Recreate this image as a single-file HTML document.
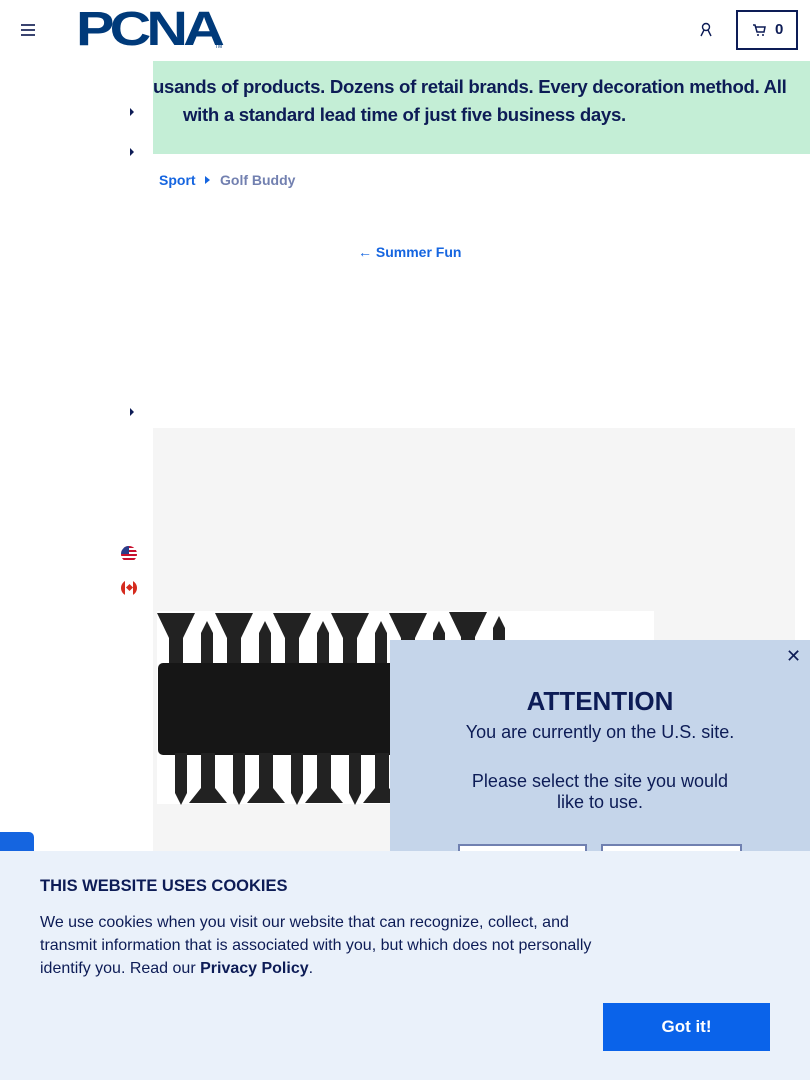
<!DOCTYPE html>
<html><head><style>
*{margin:0;padding:0;box-sizing:border-box}
body{width:810px;height:1080px;position:relative;overflow:hidden;background:#fff;font-family:"Liberation Sans",sans-serif;color:#0d1c56}
.abs{position:absolute}
</style></head><body>
<div class="abs" style="left:21px;top:24px;width:14px">
<div style="height:2px;background:#3a4470;margin-bottom:3px"></div><div style="height:2px;background:#3a4470;margin-bottom:3px"></div><div style="height:2px;background:#3a4470"></div></div>
<div class="abs" style="left:76px;top:3px;font:900 48px 'Liberation Sans';color:#003a7a;letter-spacing:-4px;line-height:54px;transform:scaleX(1.2);transform-origin:left">PCNA</div>
<div class="abs" style="left:215px;top:44px;font-size:5px;color:#003a7a">TM</div>
<svg class="abs" style="left:699px;top:22px" width="14" height="16" viewBox="0 0 14 16"><circle cx="7" cy="5" r="3.5" fill="none" stroke="#0d1c56" stroke-width="1.4"/><path d="M2 14 L5 8 M12 14 L9 8" stroke="#0d1c56" stroke-width="1.4" fill="none"/></svg>
<div class="abs" style="left:736px;top:10px;width:62px;height:40px;border:2px solid #0d1c56"></div>
<svg class="abs" style="left:752px;top:23px" width="14" height="14" viewBox="0 0 14 14"><path d="M1 2h2l2 7h7l1-5H4" fill="none" stroke="#0d1c56" stroke-width="1.5"/><circle cx="6" cy="12" r="1" fill="#0d1c56"/><circle cx="11" cy="12" r="1" fill="#0d1c56"/></svg>
<div class="abs" style="left:775px;top:21px;font:bold 15px 'Liberation Sans'">0</div>
<div class="abs" style="left:153px;top:61px;width:657px;height:93px;background:#c4eed6"></div>
<div class="abs" style="left:153px;top:73px;width:657px;font:bold 18.6px/28px 'Liberation Sans';white-space:nowrap;letter-spacing:-0.3px;overflow:hidden">usands of products. Dozens of retail brands. Every decoration method. All<br><span style="padding-left:30px">with a standard lead time of just five business days.</span></div>
<div class="abs" style="left:130px;top:108px;border-left:4px solid #0d1c56;border-top:4px solid transparent;border-bottom:4px solid transparent"></div>
<div class="abs" style="left:130px;top:148px;border-left:4px solid #0d1c56;border-top:4px solid transparent;border-bottom:4px solid transparent"></div>
<div class="abs" style="left:130px;top:408px;border-left:4px solid #0d1c56;border-top:4px solid transparent;border-bottom:4px solid transparent"></div>
<div class="abs" style="left:159px;top:172px;font:bold 14px 'Liberation Sans';color:#1565e0">Sport</div>
<div class="abs" style="left:205px;top:176px;border-left:5px solid #1565e0;border-top:4px solid transparent;border-bottom:4px solid transparent"></div>
<div class="abs" style="left:220px;top:172px;font:bold 14px 'Liberation Sans';color:#7280b0">Golf Buddy</div>
<div class="abs" style="left:358px;top:244px;font:bold 14px 'Liberation Sans';color:#1565e0">← Summer Fun</div>
<div class="abs" style="left:121px;top:546px;width:16px;height:16px;border-radius:50%;background:repeating-linear-gradient(#c8102e 0 2px,#fff 2px 4px);overflow:hidden"><div style="width:8px;height:8px;background:#2a3c8a"></div></div>
<div class="abs" style="left:121px;top:580px;width:16px;height:16px;border-radius:50%;background:linear-gradient(90deg,#d52b1e 4px,#fff 4px 12px,#d52b1e 12px)"><div style="margin:5px auto;width:5px;height:5px;background:#d52b1e;transform:rotate(45deg)"></div></div>
<div class="abs" style="left:153px;top:428px;width:642px;height:440px;background:#f5f5f5"></div>
<div class="abs" style="left:157px;top:611px;width:497px;height:193px;background:#fff"></div>
<svg class="abs" style="left:157px;top:608px" width="360" height="200" viewBox="0 0 360 200">
<g fill="#222">
<g id="t"><path d="M0 5h38l-12 25v30h-14v-30z"/><path d="M44 25l6-12 6 12v40h-12z"/></g>
<use href="#t" x="58"/><use href="#t" x="116"/><use href="#t" x="174"/><use href="#t" x="232"/><path d="M292 4h38l-12 25v30h-14v-30z"/><path d="M336 20l6-12 6 12v40h-12z"/>
<rect x="1" y="55" width="359" height="92" rx="5" fill="#161616"/>
<g id="b"><path d="M18 145h12v40l-6 12-6-12z"/><path d="M44 145h14v35l12 15h-38l12-15z"/></g>
<use href="#b" x="58"/><use href="#b" x="116"/><use href="#b" x="174"/><use href="#b" x="232"/>
</g></svg>
<div class="abs" style="left:390px;top:640px;width:420px;height:260px;background:#c5d5ea"></div>
<div class="abs" style="left:786px;top:646px;font-size:18px">✕</div>
<div class="abs" style="left:390px;top:686px;width:420px;text-align:center;font:bold 26px 'Liberation Sans'">ATTENTION</div>
<div class="abs" style="left:390px;top:722px;width:420px;text-align:center;font:18px/21px 'Liberation Sans'">You are currently on the U.S. site.</div>
<div class="abs" style="left:390px;top:771px;width:420px;text-align:center;font:18px/21px 'Liberation Sans'">Please select the site you would<br>like to use.</div>
<div class="abs" style="left:458px;top:844px;width:129px;height:20px;border:2px solid #7080b0;background:#fff"></div>
<div class="abs" style="left:601px;top:844px;width:141px;height:20px;border:2px solid #7080b0;background:#fff"></div>
<div class="abs" style="left:0;top:832px;width:34px;height:30px;background:#1565e0;border-radius:0 5px 0 0"></div>
<div class="abs" style="left:0;top:851px;width:810px;height:229px;background:#eaf1fa"></div>
<div class="abs" style="left:40px;top:877px;font:bold 16.5px 'Liberation Sans'">THIS WEBSITE USES COOKIES</div>
<div class="abs" style="left:40px;top:911px;width:560px;font:16px/23px 'Liberation Sans'">We use cookies when you visit our website that can recognize, collect, and transmit information that is associated with you, but which does not personally identify you. Read our <b>Privacy Policy</b>.</div>
<div class="abs" style="left:603px;top:1003px;width:167px;height:48px;background:#0a63ea;color:#fff;font:bold 17px/48px 'Liberation Sans';text-align:center">Got it!</div>
</body></html>
